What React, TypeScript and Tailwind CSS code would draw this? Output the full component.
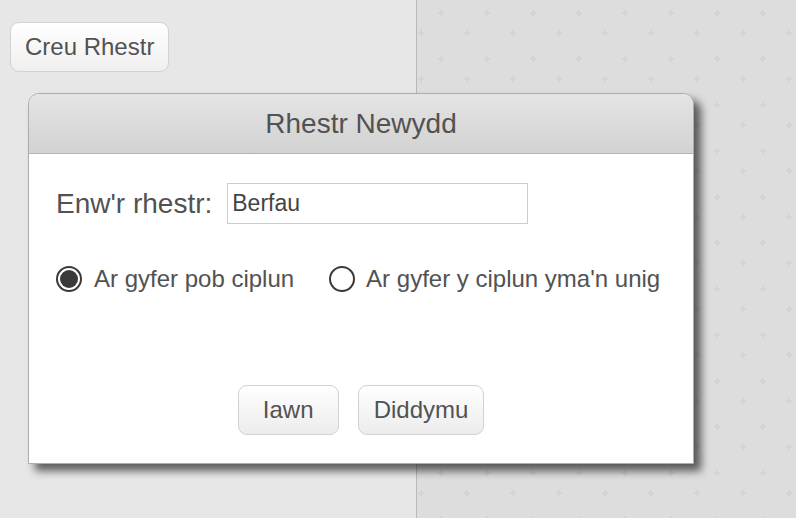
import React from "react";

const font = { fontFamily: '"Liberation Sans", Arial, Helvetica, sans-serif' };

function Radio({ checked }: { checked: boolean }) {
  return (
    <span className="flex h-[26px] w-[26px] items-center justify-center rounded-full border-2 border-[#3a3a3a] bg-white">
      {checked && <span className="h-[18px] w-[18px] rounded-full bg-[#3a3a3a]" />}
    </span>
  );
}

export default function App() {
  return (
    <div className="relative flex h-[518px] w-[796px] overflow-hidden text-[#525252]" style={font}>
      <div className="h-full w-[417px] shrink-0 border-r border-[#b8b8b8] bg-[#e6e7e6] pl-[10px] pt-[22px]">
        <button className="h-[50px] rounded-[9px] border border-[#d2d2d2] bg-gradient-to-b from-white to-[#efefef] px-[14px] text-[24px] text-[#525252]">
          Creu Rhestr
        </button>
      </div>
      <div className="relative h-full flex-1 bg-[#dcdddc]">
        <svg className="absolute inset-0 h-full w-full" aria-hidden="true">
          <defs>
            <pattern id="plus" x="-417" y="0" width="46" height="46" patternUnits="userSpaceOnUse">
              <path d="M441 10v6M438 13h6" stroke="#d3d4d3" strokeWidth="2" transform="translate(-414 0)" />
              <path d="M421 30v6M418 33h6" stroke="#d3d4d3" strokeWidth="2" transform="translate(-414 0)" />
            </pattern>
          </defs>
          <rect width="100%" height="100%" fill="url(#plus)" />
        </svg>
      </div>

      <div className="absolute left-[28px] top-[93px] flex h-[371px] w-[666px] flex-col rounded-t-[11px] border border-[#adadad] bg-white shadow-[7px_7px_8px_rgba(0,0,0,0.6)]">
        <div className="flex h-[60px] shrink-0 items-center justify-center rounded-t-[10px] border-b border-[#b4b4b4] bg-gradient-to-b from-[#e4e4e4] to-[#d2d2d2] text-[28px]">
          Rhestr Newydd
        </div>
        <div className="flex flex-1 flex-col px-[27px] pb-[28px] pt-[29px]">
          <div className="flex h-[41px] items-center">
            <span className="text-[28px]">Enw'r rhestr:</span>
            <div className="ml-[15px] flex h-[41px] w-[301px] items-center border border-[#cccccc] px-[4px] text-[23px] text-[#444444]">
              Berfau
            </div>
          </div>
          <div className="mt-[40px] flex h-[30px] items-center text-[24px]">
            <Radio checked />
            <span className="ml-[12px]">Ar gyfer pob ciplun</span>
            <span className="ml-[35px]">
              <Radio checked={false} />
            </span>
            <span className="ml-[11px]">Ar gyfer y ciplun yma'n unig</span>
          </div>
          <div className="mt-auto flex justify-center gap-[19px]">
            <button className="h-[50px] min-w-[101px] rounded-[9px] border border-[#d2d2d2] bg-gradient-to-b from-white to-[#ececec] px-[16px] text-[24px] text-[#525252]">
              Iawn
            </button>
            <button className="h-[50px] rounded-[9px] border border-[#d2d2d2] bg-gradient-to-b from-white to-[#ececec] px-[15px] text-[24px] text-[#525252]">
              Diddymu
            </button>
          </div>
        </div>
      </div>
    </div>
  );
}
